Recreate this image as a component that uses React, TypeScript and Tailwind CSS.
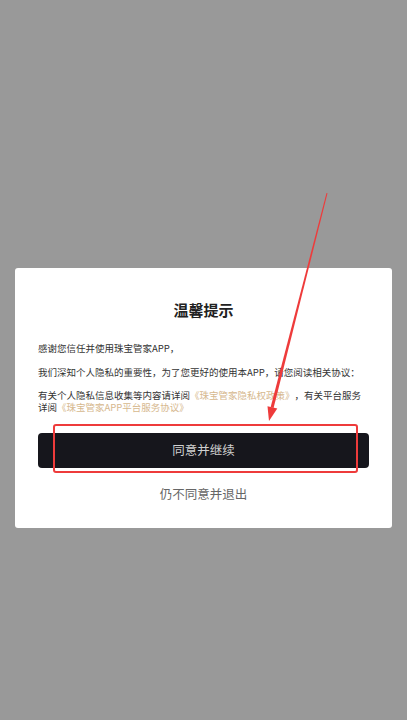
import React from "react";

export default function App() {
  const font = { fontFamily: '"Noto Sans CJK SC", "Noto Sans", sans-serif' };
  return (
    <div className="relative w-full h-[720px] bg-[#999999] overflow-hidden" style={font}>
      <div className="pt-[268px] px-[15px]">
        <div className="bg-white rounded-[3px] px-[23px] pt-[32px] pb-[26px]">
          <h1 className="text-center text-[15px] leading-[20px] font-bold text-[#222] mb-[22px]">温馨提示</h1>
          <div className="text-[9.5px] leading-[12px] text-[#333] flex flex-col gap-[12px] [text-spacing-trim:space-all]">
            <p>感谢您信任并使用珠宝管家APP，</p>
            <p>我们深知个人隐私的重要性，为了您更好的使用本APP，请您阅读相关协议：</p>
            <p className="mt-[-1px] whitespace-nowrap">
              有关个人隐私信息收集等内容请详阅<span className="text-[#d6b88e]">《珠宝管家隐私权政策》</span>，有关平台服务
              <br />
              详阅<span className="text-[#d6b88e]">《珠宝管家APP平台服务协议》</span>
            </p>
          </div>
          <button className="mt-[20px] w-full h-[35px] rounded-[4px] bg-[#16161c] text-[#d0d0d0] text-[12.5px]">
            同意并继续
          </button>
          <div className="mt-[18px] text-center text-[12.5px] leading-[16px] text-[#666]">仍不同意并退出</div>
        </div>
      </div>
      <svg className="absolute inset-0 pointer-events-none" width="407" height="720" viewBox="0 0 407 720">
        <polygon points="326.5,193 327.5,193.3 273.6,408 270.6,407.2" fill="#ee3b3b" />
        <polygon points="269,421 277.3,408.6 267.5,406.2" fill="#ee3b3b" />
        <rect x="54" y="425" width="303" height="47" rx="2" fill="none" stroke="#ee3b3b" strokeWidth="2" />
      </svg>
    </div>
  );
}
